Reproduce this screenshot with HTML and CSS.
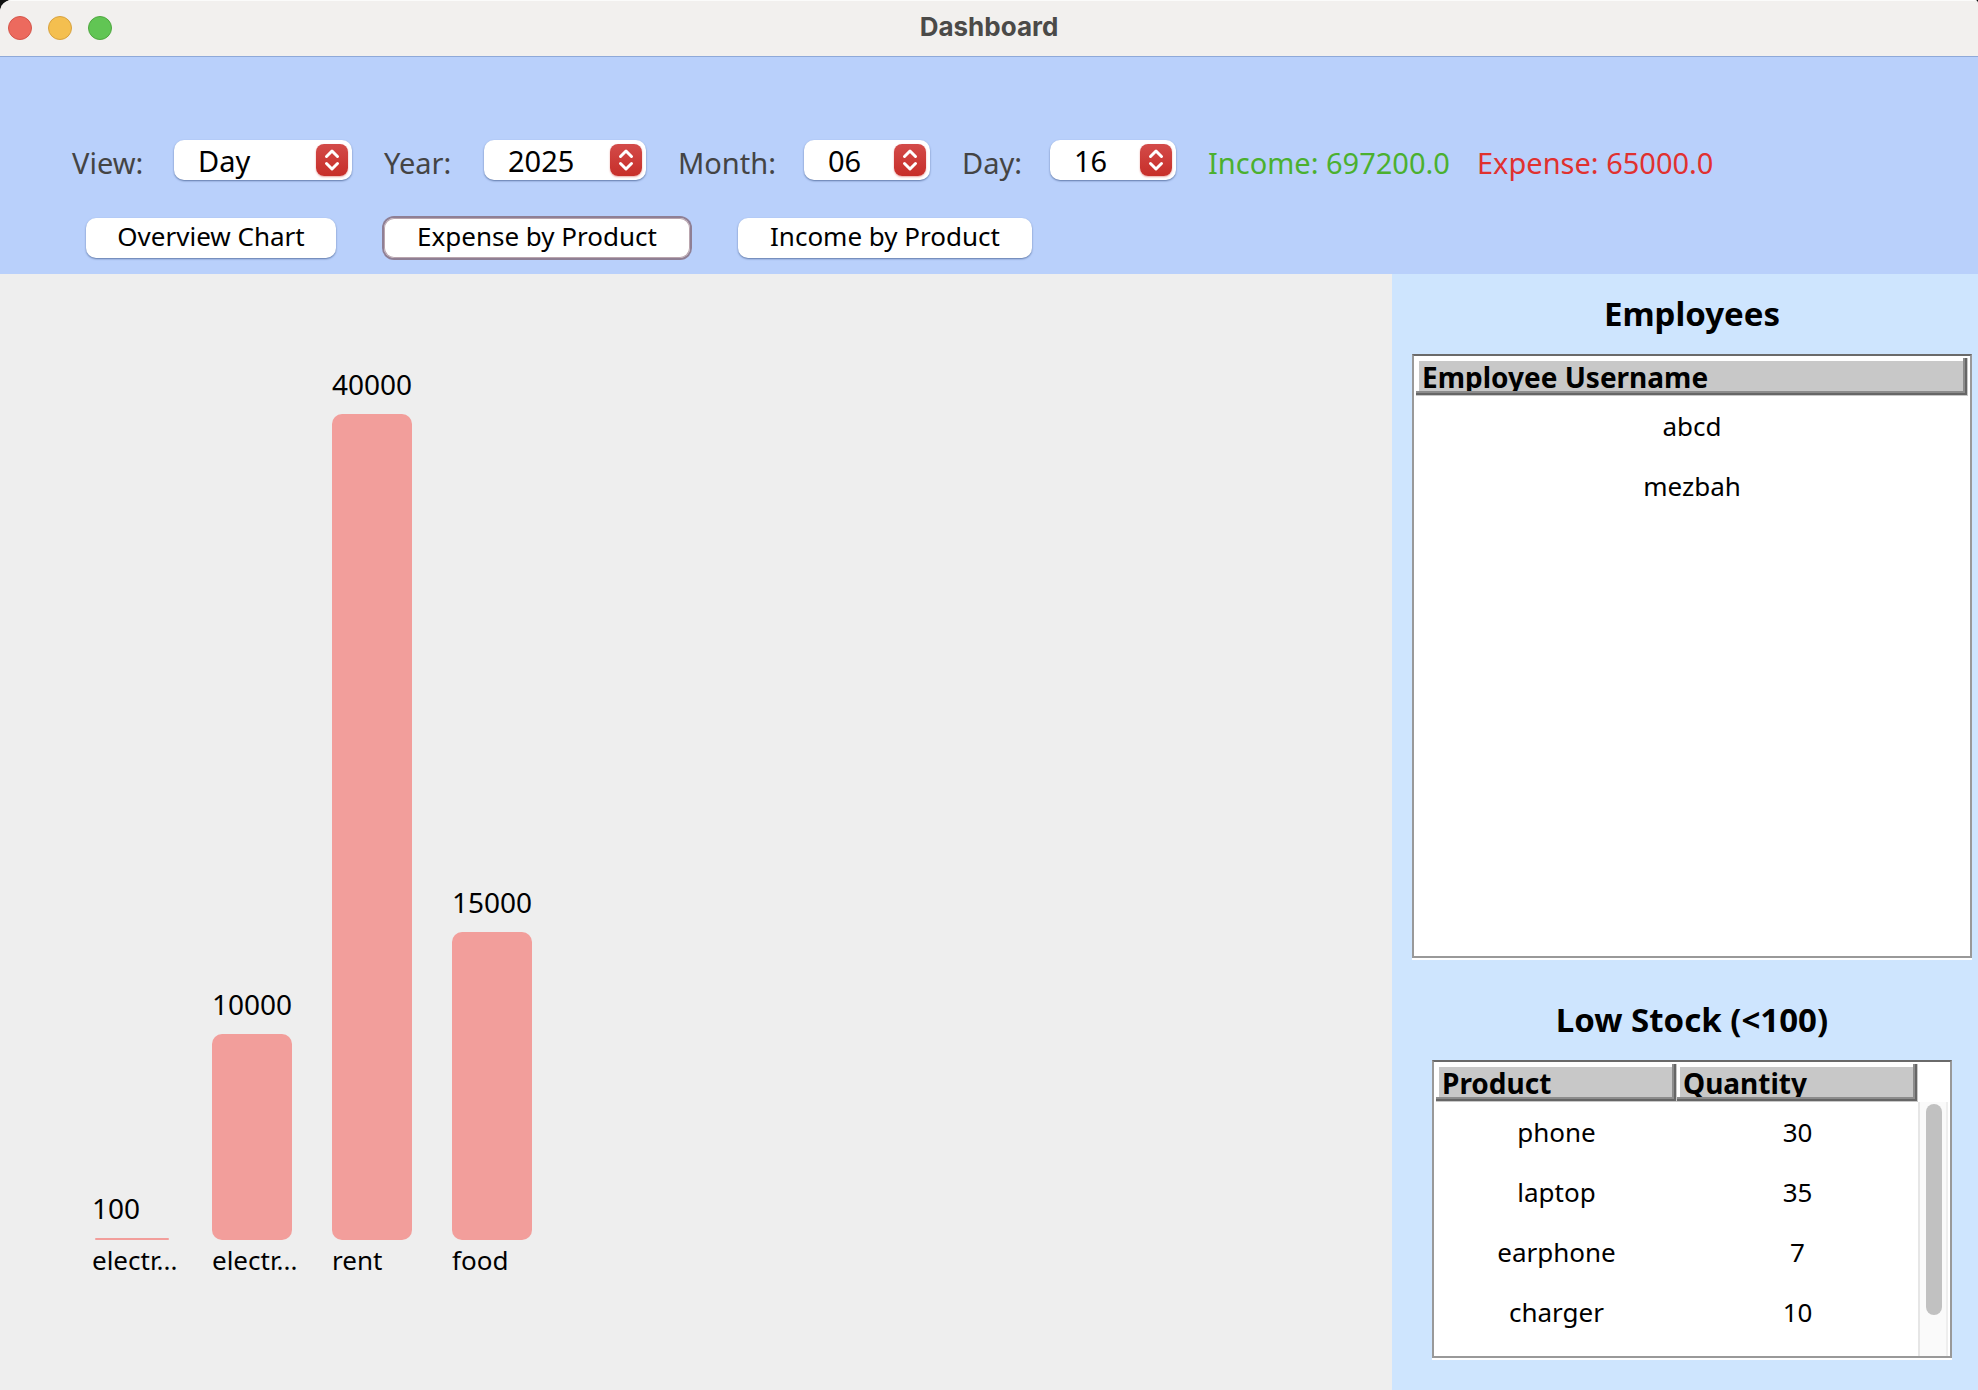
FILE: index.html
```html
<!DOCTYPE html>
<html lang="en">
<head>
<meta charset="utf-8">
<title>Dashboard</title>
<link rel="stylesheet" href="styles.css">
</head>
<body>
<div class="window">
  <header class="titlebar">
    <div class="lights">
      <button class="light light-close" type="button" aria-label="Close"></button>
      <button class="light light-minimize" type="button" aria-label="Minimize"></button>
      <button class="light light-zoom" type="button" aria-label="Zoom"></button>
    </div>
    <h1 class="title">Dashboard</h1>
  </header>

  <section class="toolbar">
    <form class="filters">
      <div class="field">
        <label class="label label-view" for="view">View:</label>
        <div class="picker picker-view">
          <select id="view"><option>Day</option></select>
          <svg class="stepper" viewBox="0 0 32 32" aria-hidden="true"><path d="M10.500 12.500 16 7l5.500 5.500M10.500 19.500 16 25l5.500-5.500"/></svg>
        </div>
      </div>
      <div class="field">
        <label class="label label-year" for="year">Year:</label>
        <div class="picker picker-year">
          <select id="year"><option>2025</option></select>
          <svg class="stepper" viewBox="0 0 32 32" aria-hidden="true"><path d="M10.500 12.500 16 7l5.500 5.500M10.500 19.500 16 25l5.500-5.500"/></svg>
        </div>
      </div>
      <div class="field">
        <label class="label label-month" for="month">Month:</label>
        <div class="picker picker-short">
          <select id="month"><option>06</option></select>
          <svg class="stepper" viewBox="0 0 32 32" aria-hidden="true"><path d="M10.500 12.500 16 7l5.500 5.500M10.500 19.500 16 25l5.500-5.500"/></svg>
        </div>
      </div>
      <div class="field">
        <label class="label label-day" for="day">Day:</label>
        <div class="picker picker-short">
          <select id="day"><option>16</option></select>
          <svg class="stepper" viewBox="0 0 32 32" aria-hidden="true"><path d="M10.500 12.500 16 7l5.500 5.500M10.500 19.500 16 25l5.500-5.500"/></svg>
        </div>
      </div>
      <div class="totals">
        <output class="label total-income">Income: 697200.0</output>
        <output class="label total-expense">Expense: 65000.0</output>
      </div>
    </form>
    <nav class="actions">
      <button class="button button-overview" type="button">Overview Chart</button>
      <button class="button button-expense is-focused" type="button">Expense by Product</button>
      <button class="button button-income" type="button">Income by Product</button>
    </nav>
  </section>

  <main class="content">
    <section class="chart" aria-label="Expense by Product">
      <div class="plot">
        <div class="column"><span class="value">100</span><div class="bar bar-flat" style="height:0.25%"></div></div>
        <div class="column"><span class="value">10000</span><div class="bar" style="height:25%"></div></div>
        <div class="column"><span class="value">40000</span><div class="bar" style="height:100%"></div></div>
        <div class="column"><span class="value">15000</span><div class="bar" style="height:37.300%"></div></div>
      </div>
      <div class="categories">
        <span>electr...</span>
        <span>electr...</span>
        <span>rent</span>
        <span>food</span>
      </div>
    </section>

    <aside class="sidebar">
      <h2 class="heading">Employees</h2>
      <div class="frame frame-employees">
        <table class="grid">
          <thead><tr><th scope="col"><div class="head">Employee Username</div></th></tr></thead>
          <tbody>
            <tr><td>abcd</td></tr>
            <tr><td>mezbah</td></tr>
          </tbody>
        </table>
      </div>

      <h2 class="heading heading-stock">Low Stock (&lt;100)</h2>
      <div class="frame frame-stock">
        <table class="grid">
          <thead><tr><th scope="col"><div class="head">Product</div></th><th scope="col"><div class="head">Quantity</div></th></tr></thead>
          <tbody>
            <tr><td>phone</td><td>30</td></tr>
            <tr><td>laptop</td><td>35</td></tr>
            <tr><td>earphone</td><td>7</td></tr>
            <tr><td>charger</td><td>10</td></tr>
          </tbody>
        </table>
        <div class="track"><div class="thumb"></div></div>
      </div>
    </aside>
  </main>
</div>
</body>
</html>
```
FILE: styles.css
```css
* {
  box-sizing: border-box;
}

body {
  margin: 0;
  background: #111;
  color: #000;
  font-family: "Noto Sans", sans-serif;
  font-size: 26px;
}

button,
select {
  font: inherit;
  color: inherit;
}

.window {
  display: flex;
  flex-direction: column;
  min-height: 100vh;
  overflow: hidden;
  border-radius: 12px 4px 0 0;
  background: #eee;
}

/* Title bar */
.titlebar {
  display: grid;
  grid-template-columns: 1fr auto 1fr;
  align-items: center;
  height: 57px;
  padding: 0 8px;
  border-top: 1px solid #fbfbfa;
  border-bottom: 1px solid #8fa9d8;
  background: #f2f0ee;
}

.lights {
  display: flex;
  gap: 16px;
  margin-bottom: 2px;
}

.light {
  width: 24px;
  height: 24px;
  padding: 0;
  border: 1px solid;
  border-radius: 50%;
}

.light-close {
  border-color: #d5554a;
  background: #ec6a5e;
}

.light-minimize {
  border-color: #d8a23f;
  background: #f4bf4f;
}

.light-zoom {
  border-color: #4fa73f;
  background: #61c554;
}

.title {
  margin: 0 0 4px;
  color: #4b4a48;
  font-family: Inter, sans-serif;
  font-size: 26px;
  font-weight: 700;
  line-height: 32px;
}

/* Toolbar */
.toolbar {
  padding: 83px 72px 16px;
  background: #b9d0fb;
}

.filters {
  display: flex;
  align-items: flex-start;
  gap: 32px;
  font-size: 29px;
}

.field {
  display: flex;
  gap: 32px;
}

.label {
  color: #444;
  line-height: 46px;
  white-space: nowrap;
}

.label-view {
  width: 70px;
}

.label-year {
  width: 68px;
}

.label-month {
  width: 94px;
}

.label-day {
  width: 56px;
}

.picker {
  position: relative;
  height: 40px;
}

.picker select {
  width: 100%;
  height: 40px;
  padding: 2px 44px 0 24px;
  border: 0;
  border-radius: 10px;
  appearance: none;
  background: #fff;
  box-shadow: 0 1px 2px #5f78a8;
  line-height: 38px;
}

.picker-view {
  width: 178px;
}

.picker-year {
  width: 162px;
}

.picker-short {
  width: 126px;
}

.stepper {
  position: absolute;
  top: 4px;
  right: 4px;
  width: 32px;
  height: 32px;
  border-radius: 8px;
  background: linear-gradient(#d34b49, #c72e29);
  box-shadow: 0 1px 2px #e9a7a5;
  fill: none;
  stroke: #fff;
  stroke-width: 3;
  stroke-linecap: round;
  stroke-linejoin: round;
  pointer-events: none;
}

.totals {
  display: flex;
  gap: 20px;
}

.total-income {
  width: 249px;
  color: #4bb02f;
}

.total-expense {
  color: #e0312f;
}

.actions {
  display: flex;
  gap: 48px;
  margin-top: 32px;
  padding-left: 14px;
}

.button {
  height: 40px;
  padding: 0 0 4px;
  border: 0;
  border-radius: 10px;
  background: #fff;
  box-shadow: 0 1px 2px #5f78a8;
  line-height: 36px;
  white-space: nowrap;
}

.button-overview {
  width: 250px;
}

.button-expense {
  width: 306px;
}

.button-income {
  width: 294px;
}

.is-focused {
  box-shadow: 0 0 0 2px #8f7f94, inset 0 0 0 1px #b9a5ae;
}

/* Main area */
.content {
  display: flex;
  flex: 1;
}

.chart {
  display: flex;
  flex: 1;
  flex-direction: column;
  padding: 140px 92px 110px;
  background: #eee;
}

.plot,
.categories {
  display: grid;
  grid-template-columns: repeat(4, 80px);
  gap: 40px;
}

.plot {
  flex: 1;
}

.column {
  display: flex;
  flex-direction: column;
  justify-content: flex-end;
}

.value {
  flex: none;
  margin-bottom: 14px;
  font-size: 28px;
  line-height: 32px;
}

.bar {
  flex: none;
  border-radius: 10px;
  background: #f29e9b;
}

.bar-flat {
  margin: 0 3px;
  border-radius: 2px;
}

.categories {
  line-height: 40px;
  white-space: nowrap;
}

/* Sidebar */
.sidebar {
  display: flex;
  flex-direction: column;
  width: 586px;
  padding: 0 6px 30px 20px;
  background: #cee5fe;
}

.heading {
  margin: 0;
  font-size: 33px;
  font-weight: 700;
  line-height: 80px;
  text-align: center;
}

.heading-stock {
  margin-top: 20px;
}

.frame {
  display: flex;
  align-items: flex-start;
  padding: 2px;
  border: 2px solid #999;
  border-top-color: #6a6a6a;
  background: #fff;
  box-shadow: 0 2px 0 #fff;
}

.frame-employees {
  flex: 1;
  margin-bottom: 2px;
}

.frame-stock {
  height: 298px;
  margin: 0 20px 2px;
  padding-bottom: 0;
}

.grid {
  flex: 1;
  width: 100%;
  border-collapse: collapse;
  table-layout: fixed;
}

.grid th {
  padding: 0;
  text-align: left;
}

/* Raised header cell: light top-left edge, dark bottom-right edge */
.head {
  height: 38px;
  overflow: clip;
  overflow-clip-margin: content-box;
  padding: 3px 5px 5px 6px;
  background: #c8c8c8;
  box-shadow: inset -1px -1px #c8c8c8, inset -3px -3px #666, inset -5px -5px #8c8c8c, inset 3px 3px #fff;
  font-size: 28px;
  font-weight: 700;
  line-height: 32px;
}

.grid td {
  height: 60px;
  padding: 0;
  line-height: 60px;
  text-align: center;
}

.track {
  flex: none;
  align-self: stretch;
  width: 30px;
  margin-top: 38px;
  padding: 2px 4px 0 6px;
  border-left: 2px solid #e6e6e6;
  border-right: 2px solid #eee;
  background: #fafafa;
}

.thumb {
  width: 16px;
  height: 211px;
  border-radius: 8px;
  background: #c1c1c1;
}
```
